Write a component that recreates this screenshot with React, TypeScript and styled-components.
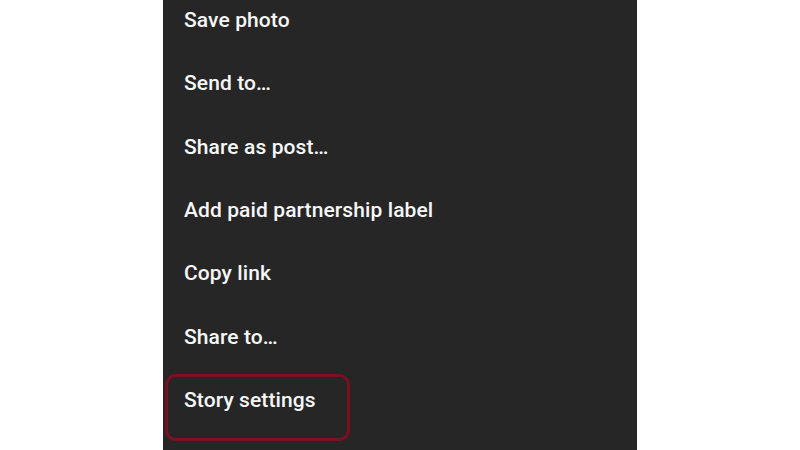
import React from 'react';
import styled, { createGlobalStyle } from 'styled-components';

const GlobalStyle = createGlobalStyle`
    html, body {
        margin: 0;
        padding: 0;
        background: #ffffff;
        font-family: Roboto, "Liberation Sans", sans-serif;
    }
`;

const Page = styled.div`
    width: 800px;
    height: 450px;
    display: flex;
    justify-content: center;
    overflow: hidden;
    background: #ffffff;
`;

const Panel = styled.div`
    width: 474px;
    height: 450px;
    background: #262626;
    overflow: hidden;
`;

// список прокручен: первый пункт обрезан сверху
const Menu = styled.ul`
    list-style: none;
    margin: -11.7px 0 0;
    padding: 0;
`;

const Item = styled.li<{ $highlighted?: boolean }>`
    position: relative;
    height: 63.33px;
    display: flex;
    align-items: center;
    padding-left: 21px;
    color: #f7f7f7;
    font-size: 21px;
    font-weight: 500;
    letter-spacing: 0.1px;

    ${props => props.$highlighted && `
        &::after {
            content: '';
            position: absolute;
            left: 2px;
            top: 5.5px;
            width: 185px;
            height: 67px;
            box-sizing: border-box;
            border: 3px solid #7c1020;
            border-radius: 11px;
        }
    `}
`;

const items = [
    'Save photo',
    'Send to…',
    'Share as post…',
    'Add paid partnership label',
    'Copy link',
    'Share to…',
    'Story settings',
];

export default function App() {
    return (
        <>
            <GlobalStyle />
            <Page>
                <Panel>
                    <Menu>
                        {items.map(label => (
                            <Item key={label} $highlighted={label === 'Story settings'}>
                                {label}
                            </Item>
                        ))}
                    </Menu>
                </Panel>
            </Page>
        </>
    );
}
